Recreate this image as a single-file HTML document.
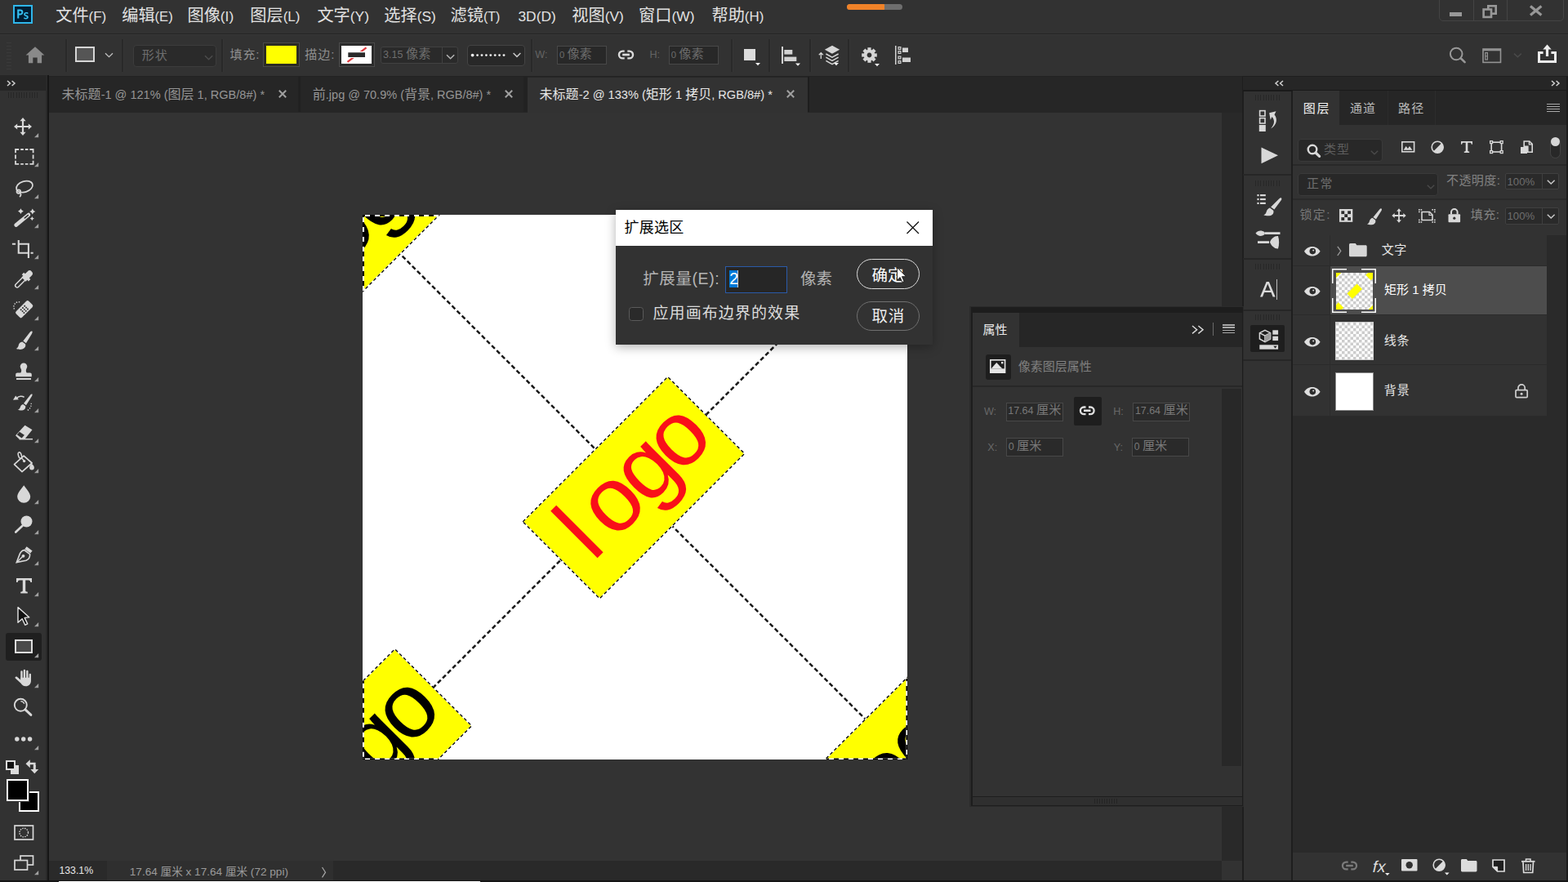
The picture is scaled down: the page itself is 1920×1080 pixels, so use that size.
<!DOCTYPE html><html lang="zh-CN"><head><meta charset="utf-8"><title>Photoshop</title><style>
html,body{margin:0;padding:0;background:#323232;}
body{width:1920px;height:1080px;position:relative;overflow:hidden;font-family:"Liberation Sans",sans-serif;}
div{position:absolute;box-sizing:border-box;}
.t{position:absolute;white-space:nowrap;line-height:1.5;overflow:visible;display:block;width:0;height:0;font-family:"Liberation Sans","Noto Sans CJK SC",sans-serif;}
.i{position:absolute;overflow:visible;}
</style></head><body><div style="left:0px;top:0px;width:1920px;height:41px;background:#323232;"></div>
<div style="left:0px;top:40.5px;width:1920px;height:1.5px;background:#242424;"></div>
<div style="left:0px;top:42px;width:1920px;height:51px;background:#323232;"></div>
<div style="left:0px;top:42px;width:1920px;height:1px;background:#383838;"></div>
<div style="left:0px;top:93px;width:1920px;height:1.5px;background:#222222;"></div>
<div style="left:60px;top:94px;width:1461px;height:44px;background:#262626;"></div>
<div style="left:60px;top:137.5px;width:1436px;height:916.5px;background:#333333;"></div>
<div style="left:1495.5px;top:137.5px;width:25px;height:916.5px;background:#292929;"></div>
<div style="left:60px;top:1053.7px;width:1436px;height:25px;background:#292929;"></div>
<div style="left:60px;top:1053.7px;width:347.5px;height:25px;background:#2f2f2f;"></div>
<div style="left:60px;top:1053.7px;width:70.5px;height:25px;background:#2a2a2a;"></div>
<div style="left:1495.5px;top:1053.7px;width:25px;height:25px;background:#323232;"></div>
<div style="left:0px;top:92px;width:57px;height:19px;background:#262626;"></div>
<div style="left:0px;top:111px;width:57px;height:969px;background:#323232;"></div>
<div style="left:55.5px;top:92px;width:2.5px;height:988px;background:#2a2a2a;"></div>
<div style="left:58px;top:92px;width:2px;height:988px;background:#161616;"></div>
<div style="left:1520.5px;top:93px;width:399.5px;height:987px;background:#1e1e1e;"></div>
<div style="left:1522px;top:93.5px;width:398px;height:16.5px;background:#262626;"></div>
<div style="left:1522.5px;top:111.8px;width:58.8px;height:968px;background:#323232;"></div>
<div style="left:1583.3px;top:111px;width:334.7px;height:969px;background:#323232;"></div>
<div style="left:1918px;top:93px;width:2px;height:987px;background:#1c1c1c;"></div>
<div style="left:1522px;top:110px;width:396px;height:1.8px;background:#1a1a1a;"></div>
<div style="left:0px;top:1078px;width:1920px;height:2px;background:#151515;"></div>
<div style="left:72px;top:1078.7px;width:516px;height:1.3px;background:#ffffff;"></div>
<div style="left:16px;top:6px;width:24px;height:23px;background:#001d33;border:2px solid #2fb6ea;"></div>
<svg class="i" style="left:16px;top:6px;" width="24" height="23" viewBox="0 0 24 23"><g fill="#35bff0"><path d="M5.2 5.6h3.5c2.3 0 3.7 1.2 3.7 3.3 0 2.3-1.6 3.5-3.8 3.5H7.3v4.2H5.2zM7.3 7.4v3.2h1.1c1.2 0 1.9-.6 1.9-1.7 0-1-.7-1.5-1.8-1.5zM16.3 10.6c-.9 0-1.3.3-1.3.8 0 .5.4.8 1.5 1.2 1.6.6 2.3 1.3 2.3 2.5 0 1.6-1.2 2.5-3.1 2.5-.9 0-1.8-.2-2.4-.5v-1.8c.7.4 1.6.7 2.4.7.8 0 1.2-.3 1.2-.8s-.4-.8-1.4-1.2c-1.600-.6-2.300-1.400-2.300-2.500 0-1.400 1.100-2.400 3-2.400.8 0 1.600.1 2.200.4v1.700c-.6-.3-1.400-.6-2.100-.6z"/></g></svg>
<span class="t" style="left:68.23px;top:3.55px;font-size:20.2px;color:#e2e2e2">文件<span style="font-size:16.92px">(F)</span></span>
<span class="t" style="left:149.19px;top:3.55px;font-size:20.2px;color:#e2e2e2">编辑<span style="font-size:16.57px">(E)</span></span>
<span class="t" style="left:229.46px;top:3.55px;font-size:20.2px;color:#e2e2e2">图像<span style="font-size:17.37px">(I)</span></span>
<span class="t" style="left:306.26px;top:3.55px;font-size:20.2px;color:#e2e2e2">图层<span style="font-size:17.03px">(L)</span></span>
<span class="t" style="left:388.43px;top:3.55px;font-size:20.2px;color:#e2e2e2">文字<span style="font-size:17.37px">(Y)</span></span>
<span class="t" style="left:470.25px;top:3.55px;font-size:20.2px;color:#e2e2e2">选择<span style="font-size:17.37px">(S)</span></span>
<span class="t" style="left:551.59px;top:3.55px;font-size:20.2px;color:#e2e2e2">滤镜<span style="font-size:15.91px">(T)</span></span>
<span class="t" style="left:634.48px;top:3.55px;font-size:20.2px;color:#e2e2e2"><span style="font-size:17.37px">3D(D)</span></span>
<span class="t" style="left:700.37px;top:3.55px;font-size:20.2px;color:#e2e2e2">视图<span style="font-size:17.37px">(V)</span></span>
<span class="t" style="left:782.10px;top:3.55px;font-size:20.2px;color:#e2e2e2">窗口<span style="font-size:17.37px">(W)</span></span>
<span class="t" style="left:871.47px;top:3.55px;font-size:20.2px;color:#e2e2e2">帮助<span style="font-size:16.91px">(H)</span></span>
<div style="left:1037px;top:5px;width:68px;height:7px;background:#6e6e6e;border-radius:4px;"></div>
<div style="left:1037px;top:5px;width:46px;height:7px;background:#f08228;border-radius:4px 1px 1px 4px;"></div>
<div style="left:1762px;top:-4px;width:153px;height:30px;border:1px solid #444;border-radius:0 0 5px 5px;"></div>
<div style="left:1803.5px;top:0px;width:1px;height:26px;background:#444;"></div>
<div style="left:1844.5px;top:0px;width:1px;height:26px;background:#444;"></div>
<div style="left:1775px;top:15px;width:15px;height:5px;background:#989898;"></div>
<svg class="i" style="left:1812px;top:4px;" width="24" height="20" viewBox="0 0 24 20"><g fill="none" stroke="#989898" stroke-width="2.6"><rect x="10.3" y="3.3" width="9.4" height="9.4"/><rect x="4.6" y="7.5" width="9.4" height="9.4" fill="#323232"/></g></svg>
<svg class="i" style="left:1870px;top:4px;" width="22" height="18" viewBox="0 0 22 18"><path d="M4 3.6L17.4 14.4M17.4 3.6L4 14.4" stroke="#989898" stroke-width="3.2" fill="none"/></svg>
<div style="left:80px;top:48px;width:2px;height:40px;background:#292929;"></div>
<div style="left:82px;top:48px;width:1px;height:40px;background:#363636;"></div>
<div style="left:149px;top:48px;width:2px;height:40px;background:#292929;"></div>
<div style="left:151px;top:48px;width:1px;height:40px;background:#363636;"></div>
<div style="left:271px;top:48px;width:2px;height:40px;background:#292929;"></div>
<div style="left:273px;top:48px;width:1px;height:40px;background:#363636;"></div>
<div style="left:650px;top:48px;width:2px;height:40px;background:#292929;"></div>
<div style="left:652px;top:48px;width:1px;height:40px;background:#363636;"></div>
<div style="left:895px;top:48px;width:2px;height:40px;background:#292929;"></div>
<div style="left:897px;top:48px;width:1px;height:40px;background:#363636;"></div>
<div style="left:941px;top:48px;width:2px;height:40px;background:#292929;"></div>
<div style="left:943px;top:48px;width:1px;height:40px;background:#363636;"></div>
<div style="left:990.5px;top:48px;width:2px;height:40px;background:#292929;"></div>
<div style="left:992.5px;top:48px;width:1px;height:40px;background:#363636;"></div>
<div style="left:1038px;top:48px;width:2px;height:40px;background:#292929;"></div>
<div style="left:1040px;top:48px;width:1px;height:40px;background:#363636;"></div>
<div style="left:8px;top:52px;width:6px;height:1px;background:#3a3a3a;"></div>
<div style="left:8px;top:56px;width:6px;height:1px;background:#3a3a3a;"></div>
<div style="left:8px;top:60px;width:6px;height:1px;background:#3a3a3a;"></div>
<div style="left:8px;top:64px;width:6px;height:1px;background:#3a3a3a;"></div>
<div style="left:8px;top:68px;width:6px;height:1px;background:#3a3a3a;"></div>
<div style="left:8px;top:72px;width:6px;height:1px;background:#3a3a3a;"></div>
<div style="left:8px;top:76px;width:6px;height:1px;background:#3a3a3a;"></div>
<div style="left:8px;top:80px;width:6px;height:1px;background:#3a3a3a;"></div>
<div style="left:8px;top:84px;width:6px;height:1px;background:#3a3a3a;"></div>
<svg class="i" style="left:30px;top:55px;" width="26" height="24" viewBox="0 0 26 24"><path d="M13 2.2L1.6 12.6h3.3v9.6h5.400v-6.600h5.400v6.600h5.400v-9.600h3.300z" fill="#8a8a8a"/></svg>
<div style="left:92px;top:57px;width:24px;height:19px;background:#555;border:2px solid #d6d6d6;"></div>
<svg class="i" style="left:127.5px;top:63.5px;" width="11" height="8" viewBox="0 0 11 8"><path d="M1 1.200l4.500 4.400 4.500-4.400" fill="none" stroke="#c0c0c0" stroke-width="1.300"/></svg>
<div style="left:162.5px;top:55px;width:102px;height:27px;background:#2a2a2a;border:1px solid #3c3c3c;border-radius:4px;"></div>
<span class="t" style="left:173.80px;top:56.92px;font-size:15px;color:#6e6e6e;letter-spacing:1.04px">形状</span>
<svg class="i" style="left:250px;top:67px;" width="12" height="8" viewBox="0 0 12 8"><path d="M1 1.2l4.6 4.600 4.600-4.600" fill="none" stroke="#4c4c4c" stroke-width="1.5"/></svg>
<span class="t" style="left:281.46px;top:56.33px;font-size:15px;color:#8e8e8e;letter-spacing:0.95px">填充:</span>
<div style="left:322px;top:52px;width:45px;height:30px;background:#2b2b22;border:1px solid #4b4b4b;"></div>
<div style="left:326px;top:56px;width:37px;height:22px;background:#ffff00;"></div>
<span class="t" style="left:373.17px;top:56.33px;font-size:15px;color:#8e8e8e;letter-spacing:1.1px">描边:</span>
<div style="left:414.5px;top:52px;width:44px;height:30px;background:#2b2b2b;border:1px solid #4b4b4b;"></div>
<div style="left:418px;top:56px;width:37px;height:22px;background:#ffffff;"></div>
<svg class="i" style="left:418px;top:56px;" width="37" height="22" viewBox="0 0 37 22"><path d="M7.5 19.800L30.500 2.300" stroke="#e03a3e" stroke-width="2.200"/><rect x="6.500" y="7" width="24" height="8" fill="#fff"/><rect x="8.300" y="8.300" width="20.700" height="5.700" fill="#2a2a2a"/></svg>
<div style="left:465.5px;top:56.5px;width:95.5px;height:21.5px;background:#2a2a2a;border:1px solid #414141;border-radius:3px;"></div>
<div style="left:540.5px;top:57px;width:1px;height:21px;background:#414141;"></div>
<span class="t" style="left:469.12px;top:55.38px;font-size:15.2px;color:#6e6e6e"><span style="font-size:12.52px">3.15 </span>像素</span>
<svg class="i" style="left:546px;top:66px;" width="12" height="8" viewBox="0 0 12 8"><path d="M1 1.2l4.6 4.600 4.600-4.600" fill="none" stroke="#b4b4b4" stroke-width="1.5"/></svg>
<div style="left:572px;top:55px;width:70.5px;height:25.5px;background:#282828;border:1px solid #444;border-radius:4px;"></div>
<svg class="i" style="left:572px;top:55px;" width="70" height="25" viewBox="0 0 70 25"><g fill="#f0f0f0"><circle cx="6.6" cy="12.600" r="1.9"/><circle cx="12.6" cy="12.600" r="1.4"/><circle cx="18.0" cy="12.600" r="1.4"/><circle cx="23.4" cy="12.600" r="1.4"/><circle cx="28.8" cy="12.600" r="1.4"/><circle cx="34.2" cy="12.600" r="1.4"/><circle cx="39.6" cy="12.600" r="1.4"/><circle cx="45.0" cy="12.600" r="1.4"/></g><path d="M56.600 10l4.400 4.400 4.400-4.400" fill="none" stroke="#c6c6c6" stroke-width="1.5"/></svg>
<span class="t" style="left:655.31px;top:58.27px;font-size:12.6px;color:#646464">W:</span>
<div style="left:682px;top:55.5px;width:60.5px;height:23px;background:#282828;border:1px solid #484848;"></div>
<span class="t" style="left:685.02px;top:55.38px;font-size:15.2px;color:#6c6c6c"><span style="font-size:11.28px">0 </span>像素</span>
<svg class="i" style="left:756.3px;top:61px;" width="21" height="12" viewBox="0 0 20.500 11.600"><g fill="none" stroke="#dcdcdc" stroke-width="2.300"><path d="M8.500 1.500H6.200a4.300 4.300 0 0 0 0 8.600h2.300M12 1.500h2.300a4.300 4.300 0 0 1 0 8.600H12"/><path d="M6 5.800h8.500" stroke-width="2.600"/></g></svg>
<span class="t" style="left:795.48px;top:58.27px;font-size:12.6px;color:#646464">H:</span>
<div style="left:819px;top:55.5px;width:60.5px;height:23px;background:#282828;border:1px solid #484848;"></div>
<span class="t" style="left:821.82px;top:55.38px;font-size:15.2px;color:#6c6c6c"><span style="font-size:11.28px">0 </span>像素</span>
<div style="left:911px;top:60px;width:14px;height:14px;background:#dcdcdc;"></div>
<svg class="i" style="left:925px;top:77px;" width="6" height="4" viewBox="0 0 6 4"><path d="M0 0h6l-3 3.200z" fill="#f2f2f2"/></svg>
<svg class="i" style="left:956px;top:56px;" width="26" height="26" viewBox="0 0 26 26"><g fill="#d2d2d2"><rect x="1" y="1" width="2" height="21"/><rect x="4.300" y="5" width="10" height="5.600"/><rect x="4.300" y="13.600" width="15" height="5.400"/></g><g transform="translate(18 21.500)"><path d="M0 0h6l-3 3.200z" fill="#f2f2f2"/></g></svg>
<svg class="i" style="left:1001px;top:55px;" width="28" height="26" viewBox="0 0 28 26"><g fill="none" stroke="#d6d6d6" stroke-width="1.500"><path d="M18 1.600l7.600 4.200-7.600 4.200-7.600-4.200z" fill="#d6d6d6"/><path d="M10.400 11l7.600 4.200 7.600-4.200M10.400 15.200l7.600 4.200 7.600-4.200M10.400 19.400l7.600 4.200 7.600-4.200" /><path d="M4.300 17v-7M1.800 12.300l2.500-2.600 2.500 2.600" stroke-width="1.300"/></g><g transform="translate(20 22)"><path d="M0 0h6l-3 3.200z" fill="#f2f2f2"/></g></svg>
<svg class="i" style="left:1054.5px;top:57.5px;" width="19" height="19" viewBox="0 0 19 19"><g transform="translate(9.500 9.500)" fill="#d6d6d6"><rect x="-2.100" y="-9.300" width="4.200" height="5" transform="rotate(0)"/><rect x="-2.100" y="-9.300" width="4.200" height="5" transform="rotate(45)"/><rect x="-2.100" y="-9.300" width="4.200" height="5" transform="rotate(90)"/><rect x="-2.100" y="-9.300" width="4.200" height="5" transform="rotate(135)"/><rect x="-2.100" y="-9.300" width="4.200" height="5" transform="rotate(180)"/><rect x="-2.100" y="-9.300" width="4.200" height="5" transform="rotate(225)"/><rect x="-2.100" y="-9.300" width="4.200" height="5" transform="rotate(270)"/><rect x="-2.100" y="-9.300" width="4.200" height="5" transform="rotate(315)"/><path fill-rule="evenodd" d="M0-6.800a6.800 6.800 0 1 0 .01 0zM0-2.900a2.900 2.900 0 1 1-.01 0z"/></g></svg>
<svg class="i" style="left:1071px;top:78px;" width="6" height="4" viewBox="0 0 6 4"><path d="M0 0h6l-3 3.200z" fill="#f2f2f2"/></svg>
<svg class="i" style="left:1095px;top:56px;" width="22" height="24" viewBox="0 0 22 24"><g fill="#d2d2d2"><rect x="1" y="0" width="1.500" height="23"/><rect x="10" y="2.500" width="7" height="5.500"/><rect x="10" y="14.500" width="10" height="5.500"/></g><g fill="none" stroke="#d2d2d2" stroke-width="1.200"><rect x="5.100" y="1.600" width="2.800" height="2.800"/><rect x="5.100" y="6.600" width="2.800" height="2.800"/><rect x="5.100" y="13.100" width="2.800" height="2.800"/><rect x="5.100" y="18.600" width="2.800" height="2.800"/></g></svg>
<svg class="i" style="left:1773px;top:56px;" width="24" height="24" viewBox="0 0 24 24"><circle cx="10.200" cy="10" r="7.300" fill="none" stroke="#989898" stroke-width="2"/><path d="M15.600 15.300l5 4.800" stroke="#989898" stroke-width="2.600" stroke-linecap="round"/></svg>
<svg class="i" style="left:1815px;top:58px;" width="24" height="20" viewBox="0 0 24 20"><g fill="none" stroke="#949494"><rect x="1" y="2" width="21.500" height="16.400" stroke-width="1.600"/><path d="M1 3.200h21.500" stroke-width="2.200"/><rect x="3.800" y="6.600" width="2.600" height="8.400" stroke-width="1.200"/><path d="M3.800 10.800h2.600" stroke-width="1"/></g></svg>
<svg class="i" style="left:1853px;top:64px;" width="11" height="8" viewBox="0 0 11 8"><path d="M1 1.600l4.400 4.200 4.400-4.200" fill="none" stroke="#4a4a4a" stroke-width="1.500"/></svg>
<svg class="i" style="left:1882px;top:54px;" width="25" height="24" viewBox="0 0 25 24"><g fill="none" stroke="#ececec" stroke-width="3"><path d="M7.600 10.500H2.500v11h20v-11h-5.100"/><path d="M12.500 15V3.500" stroke-width="3.200"/></g><path d="M12.500 0.500l5.200 6h-10.400z" fill="#ececec"/></svg>
<div style="left:60px;top:94.3px;width:1461px;height:42.5px;background:#262626;"></div>
<div style="left:364.5px;top:94.3px;width:3px;height:42.5px;background:#212121;"></div>
<div style="left:640.5px;top:94.3px;width:5px;height:42.5px;background:#222222;"></div>
<div style="left:645.5px;top:94.8px;width:343.5px;height:43px;background:#323232;"></div>
<div style="left:989px;top:94.3px;width:2px;height:42.5px;background:#1e1e1e;"></div>
<span class="t" style="left:75.62px;top:103.60px;font-size:16px;color:#959595">未标题<span style="font-size:14.56px">-1 @ 121% (</span>图层<span style="font-size:14.56px"> 1, RGB/8#) *</span></span>
<svg class="i" style="left:340.6px;top:109.7px;" width="10" height="10" viewBox="0 0 10 10"><path d="M.8.800l8.400 8.400M9.200.800l-8.400 8.400" fill="none" stroke="#a0a0a0" stroke-width="2"/></svg>
<span class="t" style="left:382.82px;top:103.60px;font-size:16px;color:#959595">前<span style="font-size:14.5px">.jpg @ 70.9% (</span>背景<span style="font-size:14.5px">, RGB/8#) *</span></span>
<svg class="i" style="left:617.6px;top:109.7px;" width="10" height="10" viewBox="0 0 10 10"><path d="M.8.800l8.400 8.400M9.200.800l-8.400 8.400" fill="none" stroke="#a0a0a0" stroke-width="2"/></svg>
<span class="t" style="left:660.62px;top:103.60px;font-size:16px;color:#e6e6e6">未标题<span style="font-size:14.61px">-2 @ 133% (</span>矩形<span style="font-size:14.61px"> 1 </span>拷贝<span style="font-size:14.61px">, RGB/8#) *</span></span>
<svg class="i" style="left:962.5px;top:109.7px;" width="10" height="10" viewBox="0 0 10 10"><path d="M.8.800l8.400 8.400M9.200.800l-8.400 8.400" fill="none" stroke="#a0a0a0" stroke-width="2"/></svg>
<svg class="i" style="left:8px;top:98px;" width="12" height="8" viewBox="0 0 12 8"><path d="M1 1l3.400 3-3.400 3M6.600 1l3.400 3-3.400 3" fill="none" stroke="#d0d0d0" stroke-width="1.500"/></svg>
<div style="left:10px;top:113px;width:1px;height:7px;background:#262626;"></div>
<div style="left:13.2px;top:113px;width:1px;height:7px;background:#262626;"></div>
<div style="left:16.4px;top:113px;width:1px;height:7px;background:#262626;"></div>
<div style="left:19.6px;top:113px;width:1px;height:7px;background:#262626;"></div>
<div style="left:22.8px;top:113px;width:1px;height:7px;background:#262626;"></div>
<div style="left:26px;top:113px;width:1px;height:7px;background:#262626;"></div>
<div style="left:29.2px;top:113px;width:1px;height:7px;background:#262626;"></div>
<div style="left:32.4px;top:113px;width:1px;height:7px;background:#262626;"></div>
<div style="left:35.6px;top:113px;width:1px;height:7px;background:#262626;"></div>
<div style="left:38.8px;top:113px;width:1px;height:7px;background:#262626;"></div>
<div style="left:42px;top:113px;width:1px;height:7px;background:#262626;"></div>
<div style="left:45.2px;top:113px;width:1px;height:7px;background:#262626;"></div>
<div style="left:7px;top:775px;width:44px;height:34px;background:#1f1f1f;border-radius:3px;"></div>
<svg class="i" style="left:16px;top:143.3px;" width="28" height="28" viewBox="0 0 28 28"><g fill="#d8d8d8"><path d="M12 1l3.600 4.200h-2.500v5.700h5.700v-2.500l4.200 3.600-4.200 3.600v-2.500h-5.700v5.700h2.500l-3.600 4.200-3.600-4.200h2.500v-5.700h-5.700v2.500l-4.200-3.600 4.200-3.600v2.500h5.700v-5.700h-2.500z"/></g></svg>
<svg class="i" style="left:41.6px;top:162.8px;" width="6" height="6" viewBox="0 0 6 6"><path d="M5.200 0v5.200h-5.200z" fill="#a0a0a0"/></svg>
<svg class="i" style="left:16.9px;top:180.3px;" width="28" height="28" viewBox="0 0 28 28"><path d="M1.1 3L6.2 3M8.2 3L11.8 3M13.8 3L17.4 3M19.4 3L24.5 3M1.1 20.9L6.2 20.9M8.2 20.9L11.8 20.9M13.8 20.9L17.4 20.9M19.4 20.9L24.5 20.9M2 3L2 7.2M2 9.4L2 14.5M2 16.7L2 20.9M23.6 3L23.6 7.2M23.6 9.4L23.6 14.5M23.6 16.7L23.6 20.9" fill="none" stroke="#d8d8d8" stroke-width="1.800" stroke-linecap="butt"/></svg>
<svg class="i" style="left:41.6px;top:198.8px;" width="6" height="6" viewBox="0 0 6 6"><path d="M5.200 0v5.200h-5.200z" fill="#a0a0a0"/></svg>
<svg class="i" style="left:17px;top:219px;" width="28" height="28" viewBox="0 0 28 28"><g fill="none" stroke="#d8d8d8" stroke-width="1.700"><ellipse cx="13" cy="9.600" rx="10.300" ry="6.600" transform="rotate(-18 13 9.600)"/><circle cx="5.800" cy="15.600" r="2.300"/><path d="M7.600 17.200c1.400 1.600 1.300 3.400-.6 4.800"/></g></svg>
<svg class="i" style="left:41.6px;top:238.2px;" width="6" height="6" viewBox="0 0 6 6"><path d="M5.200 0v5.200h-5.200z" fill="#a0a0a0"/></svg>
<svg class="i" style="left:17px;top:254px;" width="28" height="28" viewBox="0 0 28 28"><path d="M2.600 21.600L18 9" fill="none" stroke="#d8d8d8" stroke-width="4.600" stroke-linecap="round"/><path d="M13.300 12.900L17.300 9.600" stroke="#323232" stroke-width="1.500" stroke-linecap="round"/><path d="M8.4 1.3Q9.148 3.952 11.8 4.7Q9.148 5.448 8.4 8.1Q7.652 5.448 5 4.7Q7.652 3.952 8.4 1.3zM22.8 1.4Q23.592 4.208 26.4 5Q23.592 5.792 22.8 8.6Q22.008 5.792 19.2 5Q22.008 4.208 22.8 1.4zM22.3 11Q22.872 13.028 24.9 13.6Q22.872 14.172 22.3 16.2Q21.728 14.172 19.7 13.6Q21.728 13.028 22.3 11z" fill="#d8d8d8"/></svg>
<svg class="i" style="left:41.6px;top:274px;" width="6" height="6" viewBox="0 0 6 6"><path d="M5.200 0v5.200h-5.200z" fill="#a0a0a0"/></svg>
<svg class="i" style="left:15px;top:292.5px;" width="28" height="28" viewBox="0 0 28 28"><g fill="none" stroke="#d8d8d8" stroke-width="2.100"><path d="M7.750 1v15.750H21"/><path d="M7.750 5.750H19.900V23.100"/><path d="M-0.100 5.750H4.100M22.500 16.750H25.700"/></g></svg>
<svg class="i" style="left:41.6px;top:312px;" width="6" height="6" viewBox="0 0 6 6"><path d="M5.200 0v5.200h-5.200z" fill="#a0a0a0"/></svg>
<svg class="i" style="left:17px;top:329.5px;" width="28" height="28" viewBox="0 0 28 28"><g transform="translate(2.400 21.200) rotate(-45)"><path d="M2.300 -2.300H15V2.300H2.300A2.300 2.300 0 0 1 2.300 -2.300z" fill="none" stroke="#d8d8d8" stroke-width="1.500"/><path d="M13.200 -3.200h2.600v-2.200h3.400v2.200h4.200a3.600 3.600 0 0 1 0 7.200h-4.200v2.200h-3.400v-2.200h-2.600z" fill="#d8d8d8"/></g></svg>
<svg class="i" style="left:41.6px;top:349px;" width="6" height="6" viewBox="0 0 6 6"><path d="M5.200 0v5.200h-5.200z" fill="#a0a0a0"/></svg>
<svg class="i" style="left:15px;top:367px;" width="28" height="28" viewBox="0 0 28 28"><g transform="rotate(-45 14.500 11.500)"><rect x="3.500" y="6.500" width="22" height="10.500" rx="2.200" fill="#d8d8d8"/><g fill="#323232"><circle cx="11.300" cy="9.300" r="1"/><circle cx="14.500" cy="9.300" r="1"/><circle cx="17.700" cy="9.300" r="1"/><circle cx="11.300" cy="12" r="1"/><circle cx="14.500" cy="12" r="1"/><circle cx="17.700" cy="12" r="1"/><circle cx="11.300" cy="14.600" r="1"/><circle cx="14.500" cy="14.600" r="1"/><circle cx="17.700" cy="14.600" r="1"/></g></g><path d="M2.500 11.500a6 6 0 0 1 7-8.500" fill="none" stroke="#d8d8d8" stroke-width="1.400" stroke-dasharray="1.400 1.600"/></svg>
<svg class="i" style="left:41.6px;top:386.5px;" width="6" height="6" viewBox="0 0 6 6"><path d="M5.200 0v5.200h-5.200z" fill="#a0a0a0"/></svg>
<svg class="i" style="left:18px;top:404.5px;" width="28" height="28" viewBox="0 0 28 28"><g fill="#d8d8d8"><path d="M21.300 0.600c.6.300.5 1.500-.2 2.800L13.900 15.200l-3.600-2.600L18.900 1.600c.9-1 1.800-1.400 2.400-1z"/><path d="M9.300 13.600l3.700 2.700c1 2.800-.6 5.300-3.600 6.300-2.600.8-5.800.1-7.800-.6 2.300-.9 2.700-2.600 3.200-4.500.5-2 2.100-3.500 4.500-3.900z"/></g></svg>
<svg class="i" style="left:41.6px;top:424px;" width="6" height="6" viewBox="0 0 6 6"><path d="M5.200 0v5.200h-5.200z" fill="#a0a0a0"/></svg>
<svg class="i" style="left:19px;top:443.5px;" width="28" height="28" viewBox="0 0 28 28"><g fill="#d8d8d8"><path d="M10 0.500a4.300 4.300 0 0 1 4.300 4.300c0 1.600-1 2.600-1.300 3.700-.4 1.300-.2 2.800.7 4h4.100c1.200 0 2 .8 2 2v2.800H.2v-2.800c0-1.200.800-2 2-2h4.100c.9-1.200 1.100-2.700.7-4-.3-1.100-1.300-2.100-1.300-3.700A4.300 4.300 0 0 1 10 .5z"/><rect x="1" y="19" width="18" height="2"/></g></svg>
<svg class="i" style="left:41.6px;top:462px;" width="6" height="6" viewBox="0 0 6 6"><path d="M5.200 0v5.200h-5.200z" fill="#a0a0a0"/></svg>
<svg class="i" style="left:15.5px;top:481.5px;" width="28" height="28" viewBox="0 0 28 28"><g fill="#d8d8d8"><path d="M23.300 0.600c.5.300.4 1.300-.2 2.400L16 14.200l-3-2.300L21.200 1.400c.8-.9 1.600-1.200 2.100-.8z"/><path d="M12.200 13l3 2.300c.5 2.200-.6 4.200-3 5-2.200.7-4.900.1-6.500-.5 2.200-.7 2.700-2.100 3.300-3.600.4-1.600 1.500-2.800 3.200-3.200z"/><path d="M0 7.800l6.800-.6-3.600-4.800z"/></g><path d="M4.600 5.400c2.600-2.600 6.500-2.800 9-1" fill="none" stroke="#d8d8d8" stroke-width="1.500"/><path d="M17.800 20.300c3-1.500 4.800-4.700 4.400-8.600" fill="none" stroke="#d8d8d8" stroke-width="1.300" stroke-dasharray="1.300 1.700"/></svg>
<svg class="i" style="left:41.6px;top:499.8px;" width="6" height="6" viewBox="0 0 6 6"><path d="M5.200 0v5.200h-5.200z" fill="#a0a0a0"/></svg>
<svg class="i" style="left:17.5px;top:520px;" width="28" height="28" viewBox="0 0 28 28"><path d="M12.500 0.800l9 5.400-9 11.300H5.300L1 13.300z" fill="#d8d8d8"/><path d="M2.800 12.300l5.800 4.300 3.300-3.900-6-3.900z" fill="#323232"/><path d="M5.600 17.700H22" fill="none" stroke="#d8d8d8" stroke-width="1.500"/></svg>
<svg class="i" style="left:41.6px;top:537.2px;" width="6" height="6" viewBox="0 0 6 6"><path d="M5.200 0v5.200h-5.200z" fill="#a0a0a0"/></svg>
<svg class="i" style="left:16.5px;top:553px;" width="28" height="28" viewBox="0 0 28 28"><path d="M12.100 5.100l10 8.900-12.100 10.600L0.500 15.600z" fill="none" stroke="#d8d8d8" stroke-width="1.700" stroke-linejoin="round"/><ellipse cx="7.400" cy="4.600" rx="1.900" ry="3.900" transform="rotate(-18 7.400 4.600)" fill="none" stroke="#d8d8d8" stroke-width="1.500"/><path d="M8.800 7.600c1.600 1 3 2.300 3.800 3.800" fill="none" stroke="#d8d8d8" stroke-width="1.300"/><circle cx="12.600" cy="11.600" r="1.700" fill="#d8d8d8"/><path d="M21.200 14.300c2 1.800 3.700 3.300 3.700 5.200a2.900 2.900 0 0 1-5.800 0c0-1.900 1.600-3 2.100-5.200z" fill="#d8d8d8"/></svg>
<svg class="i" style="left:41.6px;top:574px;" width="6" height="6" viewBox="0 0 6 6"><path d="M5.200 0v5.200h-5.200z" fill="#a0a0a0"/></svg>
<svg class="i" style="left:21px;top:593.5px;" width="28" height="28" viewBox="0 0 28 28"><path d="M8.200 0.300c3.200 5 8 9 8 14a8 7.400 0 0 1-16 0c0-5 4.800-9 8-14z" fill="#d8d8d8"/></svg>
<svg class="i" style="left:41.6px;top:612px;" width="6" height="6" viewBox="0 0 6 6"><path d="M5.200 0v5.200h-5.200z" fill="#a0a0a0"/></svg>
<svg class="i" style="left:17.5px;top:631px;" width="28" height="28" viewBox="0 0 28 28"><circle cx="14.500" cy="7.500" r="7" fill="#d8d8d8"/><path d="M9.500 12.800L1.300 20.500" fill="none" stroke="#d8d8d8" stroke-width="2.700" stroke-linecap="round"/></svg>
<svg class="i" style="left:41.6px;top:649.2px;" width="6" height="6" viewBox="0 0 6 6"><path d="M5.200 0v5.200h-5.200z" fill="#a0a0a0"/></svg>
<svg class="i" style="left:18.5px;top:669.2px;" width="28" height="28" viewBox="0 0 28 28"><g fill="#d8d8d8"><path d="M13.600 0.300l7 5.200-2.400 3.100-7-5.200z"/></g><path d="M10.700 4.500l6.900 5.100c.2 3.400-1.700 6.400-4.600 7.700L1.300 19.600 5.500 8.700c1.200-2.300 3-3.700 5.200-4.200z" fill="none" stroke="#d8d8d8" stroke-width="1.600"/><path d="M1.800 19.200l6.800-6.600" fill="none" stroke="#d8d8d8" stroke-width="1.400"/><circle cx="9.500" cy="11.800" r="1.900" fill="#d8d8d8"/></svg>
<svg class="i" style="left:41.6px;top:687px;" width="6" height="6" viewBox="0 0 6 6"><path d="M5.200 0v5.200h-5.200z" fill="#a0a0a0"/></svg>
<svg class="i" style="left:19.5px;top:707.7px;" width="28" height="28" viewBox="0 0 28 28"><path d="M0 0h19v5h-1.600c-.2-1.800-.8-2.600-2.400-2.600h-3.800v12.700c0 1.200.5 1.600 2.600 1.700v1.700H5.200v-1.700c2.100-.1 2.600-.5 2.600-1.700V2.400H4C2.400 2.400 1.800 3.200 1.600 5H0z" fill="#d8d8d8"/></svg>
<svg class="i" style="left:41.6px;top:724.5px;" width="6" height="6" viewBox="0 0 6 6"><path d="M5.200 0v5.200h-5.200z" fill="#a0a0a0"/></svg>
<svg class="i" style="left:21.3px;top:743.3px;" width="28" height="28" viewBox="0 0 28 28"><path d="M1 0.600l13.800 12.300-5.700.5 3.600 7.500-3 1.400-3.500-7.600L1 19.200z" fill="#111" stroke="#e4e4e4" stroke-width="1.400" stroke-linejoin="round"/></svg>
<svg class="i" style="left:41.6px;top:762px;" width="6" height="6" viewBox="0 0 6 6"><path d="M5.200 0v5.200h-5.200z" fill="#a0a0a0"/></svg>
<svg class="i" style="left:19px;top:818.5px;" width="28" height="28" viewBox="0 0 28 28"><g fill="none" stroke="#d8d8d8" stroke-width="2.400" stroke-linecap="round"><path d="M7.450 3.500V12M10.900 1.900V12M14.350 2.900V12M17.800 7V13"/></g><path d="M6.200 10.800h12.800v3.400c0 4.800-2.900 7-6.400 7-3 0-4.700-1.500-6.200-3.700L-.2 11.600c-1-1.500.7-2.900 2.100-1.800l4.300 3.600z" fill="#d8d8d8"/></svg>
<svg class="i" style="left:41.6px;top:837px;" width="6" height="6" viewBox="0 0 6 6"><path d="M5.200 0v5.200h-5.200z" fill="#a0a0a0"/></svg>
<svg class="i" style="left:16.3px;top:854.2px;" width="28" height="28" viewBox="0 0 28 28"><circle cx="9.300" cy="9.300" r="7.500" fill="none" stroke="#d8d8d8" stroke-width="1.900"/><path d="M14.900 14.900l7 6.500" fill="none" stroke="#d8d8d8" stroke-width="2.900" stroke-linecap="round"/><path d="M9.300 4.600a4.700 4.700 0 0 1 4.400 3.200" fill="none" stroke="#d8d8d8" stroke-width="1.200"/></svg>
<div style="left:18px;top:782.5px;width:22px;height:17px;background:#4a4a4a;border:2px solid #dcdcdc;"></div>
<svg class="i" style="left:41.6px;top:799.5px;" width="6" height="6" viewBox="0 0 6 6"><path d="M5.200 0v5.200h-5.200z" fill="#a0a0a0"/></svg>
<svg class="i" style="left:17px;top:901px;" width="24" height="8" viewBox="0 0 24 8"><g fill="#d8d8d8"><circle cx="3.800" cy="4" r="2.700"/><circle cx="11.700" cy="4" r="2.700"/><circle cx="19.600" cy="4" r="2.700"/></g></svg>
<svg class="i" style="left:41.6px;top:912.5px;" width="6" height="6" viewBox="0 0 6 6"><path d="M5.200 0v5.200h-5.200z" fill="#a0a0a0"/></svg>
<div style="left:12.5px;top:937px;width:10.5px;height:10.5px;background:#dcdcdc;"></div>
<div style="left:7px;top:931px;width:11.5px;height:11.5px;background:#111;border:2px solid #dcdcdc;"></div>
<svg class="i" style="left:31px;top:929.5px;" width="18" height="18" viewBox="0 0 18 18"><g fill="#d8d8d8"><path d="M0.500 5.300L5.800 0.300v3.400h6.800v5h-2.600v-2.400H5.800v4z"/><path d="M11.300 17.300L6.400 12h3.400V7h3v5h3.400z"/></g></svg>
<div style="left:22.5px;top:968.5px;width:25.5px;height:25px;background:#000;border:2px solid #fff;"></div>
<div style="left:7.5px;top:954px;width:27px;height:26.5px;background:#000;border:2px solid #fff;outline:1px solid #323232;"></div>
<svg class="i" style="left:16.5px;top:1010px;" width="25" height="20" viewBox="0 0 25 20"><rect x="1" y="1" width="22.500" height="17" fill="none" stroke="#d8d8d8" stroke-width="1.700"/><circle cx="12.200" cy="9.500" r="5.300" fill="none" stroke="#d8d8d8" stroke-width="1.300" stroke-dasharray="1.500 1.300"/></svg>
<svg class="i" style="left:16.5px;top:1047px;" width="25" height="20" viewBox="0 0 25 20"><g fill="none" stroke="#d8d8d8" stroke-width="1.700"><rect x="8" y="1" width="15.500" height="11"/><rect x="1" y="6.500" width="15.500" height="11.500" fill="#323232"/></g></svg>
<svg class="i" style="left:41.6px;top:1065.5px;" width="6" height="6" viewBox="0 0 6 6"><path d="M5.200 0v5.200h-5.200z" fill="#a0a0a0"/></svg>
<span class="t" style="left:72.42px;top:1056.78px;font-size:12.3px;color:#e8e8e8">133.1%</span>
<span class="t" style="left:158.78px;top:1057.74px;font-size:13.6px;color:#9a9a9a">17.64 厘米 x 17.64 厘米 (72 ppi)</span>
<svg class="i" style="left:392.5px;top:1060.5px;" width="8" height="15" viewBox="0 0 8 15"><path d="M1.500 1l4 6.200-4 6.200" fill="none" stroke="#a8a8a8" stroke-width="1.200"/></svg>
<svg class="i" style="left:443.8px;top:262.8px;overflow:hidden;" width="667.4" height="667.4" viewBox="0 0 667.4 667.4"><defs><clipPath id="cv"><rect x="0" y="0" width="667.4" height="667.4"/></clipPath></defs><rect width="667.4" height="667.4" fill="#fff"/><g clip-path="url(#cv)"><g stroke="#1a1a1a" stroke-width="2.500" stroke-dasharray="5.400 3.200" fill="none"><path d="M0 2L665.4 667.4"/><path d="M667.4 -2L0 665.4"/></g><g transform="translate(331.95 334.15) rotate(-45)"><rect x="-125" y="-66" width="250" height="132" fill="#ffff00" transform="rotate(45) translate(0 0) rotate(-45)"/><g fill="#f90f19"><text x="-99.8 -62.6 -4.4 50.9" y="29.5" font-size="112" font-family="'Liberation Sans',sans-serif">logo</text></g></g><g transform="translate(0 0) rotate(-45)"><rect x="-125" y="-66" width="250" height="132" fill="#ffff00" transform="rotate(45) translate(0 0) rotate(-45)"/><g fill="#000"><text x="-99.8 -62.6 -4.4 50.9" y="29.5" font-size="112" font-family="'Liberation Sans',sans-serif">logo</text></g></g><g transform="translate(667.4 0) rotate(-45)"><rect x="-125" y="-66" width="250" height="132" fill="#ffff00" transform="rotate(45) translate(0 0) rotate(-45)"/><g fill="#000"><text x="-99.8 -62.6 -4.4 50.9" y="29.5" font-size="112" font-family="'Liberation Sans',sans-serif">logo</text></g></g><g transform="translate(0 667.4) rotate(-45)"><rect x="-125" y="-66" width="250" height="132" fill="#ffff00" transform="rotate(45) translate(-2.2 0.1) rotate(-45)"/><g fill="#000"><text x="-99.8 -62.6 -4.4 50.9" y="29.5" font-size="112" font-family="'Liberation Sans',sans-serif">logo</text></g></g><g transform="translate(667.4 667.4) rotate(-45)"><rect x="-125" y="-66" width="250" height="132" fill="#ffff00" transform="rotate(45) translate(-3.7 -3.7) rotate(-45)"/><g fill="#000"><text x="-99.8 -62.6 -4.4 50.9" y="29.5" font-size="112" font-family="'Liberation Sans',sans-serif">logo</text></g></g><rect x="-125.500" y="-66.500" width="251" height="133" fill="none" stroke="#fff" stroke-width="1.300"  transform="translate(331.95 334.15) rotate(-45)"/><rect x="-125.500" y="-66.500" width="251" height="133" fill="none" stroke="#000" stroke-width="1.300" stroke-dasharray="4 3" transform="translate(331.95 334.15) rotate(-45)"/><rect x="-125.500" y="-66.500" width="251" height="133" fill="none" stroke="#fff" stroke-width="1.300"  transform="translate(0 0) rotate(-45)"/><rect x="-125.500" y="-66.500" width="251" height="133" fill="none" stroke="#000" stroke-width="1.300" stroke-dasharray="4 3" transform="translate(0 0) rotate(-45)"/><rect x="-125.500" y="-66.500" width="251" height="133" fill="none" stroke="#fff" stroke-width="1.300"  transform="translate(667.4 0) rotate(-45)"/><rect x="-125.500" y="-66.500" width="251" height="133" fill="none" stroke="#000" stroke-width="1.300" stroke-dasharray="4 3" transform="translate(667.4 0) rotate(-45)"/><rect x="-125.500" y="-66.500" width="251" height="133" fill="none" stroke="#fff" stroke-width="1.300"  transform="translate(-2.2 667.5) rotate(-45)"/><rect x="-125.500" y="-66.500" width="251" height="133" fill="none" stroke="#000" stroke-width="1.300" stroke-dasharray="4 3" transform="translate(-2.2 667.5) rotate(-45)"/><rect x="-125.500" y="-66.500" width="251" height="133" fill="none" stroke="#fff" stroke-width="1.300"  transform="translate(663.7 663.7) rotate(-45)"/><rect x="-125.500" y="-66.500" width="251" height="133" fill="none" stroke="#000" stroke-width="1.300" stroke-dasharray="4 3" transform="translate(663.7 663.7) rotate(-45)"/><path d="M0 1L93.4 1" stroke="#fff" stroke-width="2" /><path d="M0 1L93.4 1" stroke="#000" stroke-width="2" stroke-dasharray="6 6" stroke-dashoffset="3"/><path d="M1 0L1 93.4" stroke="#fff" stroke-width="2" /><path d="M1 0L1 93.4" stroke="#000" stroke-width="2" stroke-dasharray="6 6" stroke-dashoffset="3"/><path d="M1 570.8L1 667.4" stroke="#fff" stroke-width="2" /><path d="M1 570.8L1 667.4" stroke="#000" stroke-width="2" stroke-dasharray="6 6" stroke-dashoffset="3"/><path d="M0 666.4L91.8 666.4" stroke="#fff" stroke-width="2" /><path d="M0 666.4L91.8 666.4" stroke="#000" stroke-width="2" stroke-dasharray="6 6" stroke-dashoffset="3"/><path d="M568 666.4L667.4 666.4" stroke="#fff" stroke-width="2" /><path d="M568 666.4L667.4 666.4" stroke="#000" stroke-width="2" stroke-dasharray="6 6" stroke-dashoffset="3"/><path d="M666.4 568L666.4 667.4" stroke="#fff" stroke-width="2" /><path d="M666.4 568L666.4 667.4" stroke="#000" stroke-width="2" stroke-dasharray="6 6" stroke-dashoffset="3"/></g></svg>
<div style="left:1187px;top:375px;width:336px;height:613px;background:#2b2b2b;"></div>
<div style="left:1189px;top:376px;width:333px;height:611px;background:#1d1d1d;"></div>
<div style="left:1190.5px;top:382.7px;width:330px;height:592px;background:#323232;"></div>
<div style="left:1190.5px;top:382.7px;width:330px;height:42px;background:#262626;"></div>
<div style="left:1190.5px;top:382.7px;width:57.5px;height:42px;background:#323232;"></div>
<div style="left:1190.5px;top:975.5px;width:330px;height:10.5px;background:#2f2f2f;"></div>
<div style="left:1340px;top:977.5px;width:1px;height:6px;background:#242424;"></div>
<div style="left:1343px;top:977.5px;width:1px;height:6px;background:#242424;"></div>
<div style="left:1346px;top:977.5px;width:1px;height:6px;background:#242424;"></div>
<div style="left:1349px;top:977.5px;width:1px;height:6px;background:#242424;"></div>
<div style="left:1352px;top:977.5px;width:1px;height:6px;background:#242424;"></div>
<div style="left:1355px;top:977.5px;width:1px;height:6px;background:#242424;"></div>
<div style="left:1358px;top:977.5px;width:1px;height:6px;background:#242424;"></div>
<div style="left:1361px;top:977.5px;width:1px;height:6px;background:#242424;"></div>
<div style="left:1364px;top:977.5px;width:1px;height:6px;background:#242424;"></div>
<div style="left:1367px;top:977.5px;width:1px;height:6px;background:#242424;"></div>
<span class="t" style="left:1203.39px;top:392.62px;font-size:15px;color:#ececec">属性</span>
<svg class="i" style="left:1459px;top:397.5px;" width="16" height="12" viewBox="0 0 16 12"><path d="M1 1l5.600 4.700-5.600 4.700M8.400 1l5.600 4.700-5.600 4.700" fill="none" stroke="#d8d8d8" stroke-width="1.500"/></svg>
<div style="left:1485px;top:395px;width:1.3px;height:15.5px;background:#6a6a6a;"></div>
<div style="left:1496.6px;top:397.3px;width:15.3px;height:1.3px;background:#a8a8a8;"></div>
<div style="left:1496.6px;top:400.4px;width:15.3px;height:1.3px;background:#a8a8a8;"></div>
<div style="left:1496.6px;top:403.5px;width:15.3px;height:1.3px;background:#a8a8a8;"></div>
<div style="left:1496.6px;top:406.6px;width:15.3px;height:1.3px;background:#a8a8a8;"></div>
<div style="left:1207.3px;top:434px;width:30.6px;height:30.5px;background:#1e1e1e;border-radius:3px;"></div>
<svg class="i" style="left:1211.8px;top:440px;" width="19.4" height="17" viewBox="0 0 19.4 17"><rect x="0" y="0" width="19.400" height="17" fill="#e4e4e4"/><rect x="1.600" y="1.600" width="16.200" height="9.800" fill="#1e1e1e"/><path d="M1.600 11.400l4-4.300 2.700-3.100 3.700 3.900 2.200 2.300 1.500 1.200z" fill="#e4e4e4"/><rect x="14" y="3" width="2.400" height="2.400" fill="#e4e4e4"/></svg>
<span class="t" style="left:1246.72px;top:437.93px;font-size:15px;color:#808080">像素图层属性</span>
<div style="left:1190.5px;top:472px;width:330px;height:2px;background:#272727;"></div>
<div style="left:1495.7px;top:476px;width:24.8px;height:462px;background:#282828;"></div>
<span class="t" style="left:1204.91px;top:494.77px;font-size:12.6px;color:#686868">W:</span>
<div style="left:1232px;top:492.5px;width:70px;height:23px;background:#2a2a2a;border:1px solid #484848;"></div>
<span class="t" style="left:1234.17px;top:491.08px;font-size:15.2px;color:#787878"><span style="font-size:12.55px">17.64 </span>厘米</span>
<div style="left:1314.5px;top:486px;width:34.5px;height:34.5px;background:#1e1e1e;border-radius:2px;"></div>
<svg class="i" style="left:1321px;top:496.8px;" width="20.5" height="11.6" viewBox="0 0 20.500 11.600"><g fill="none" stroke="#e0e0e0" stroke-width="2.300"><path d="M8.500 1.500H6.200a4.300 4.300 0 0 0 0 8.600h2.300M12 1.500h2.300a4.300 4.300 0 0 1 0 8.600H12"/><path d="M6 5.800h8.500" stroke-width="2.600"/></g></svg>
<span class="t" style="left:1363.18px;top:494.77px;font-size:12.6px;color:#686868">H:</span>
<div style="left:1387.2px;top:492.5px;width:69.5px;height:23px;background:#2a2a2a;border:1px solid #484848;"></div>
<span class="t" style="left:1389.98px;top:491.08px;font-size:15.2px;color:#787878"><span style="font-size:12.41px">17.64 </span>厘米</span>
<span class="t" style="left:1209.30px;top:538.96px;font-size:12.6px;color:#686868">X:</span>
<div style="left:1232px;top:536.3px;width:70px;height:23px;background:#2a2a2a;border:1px solid #484848;"></div>
<span class="t" style="left:1234.66px;top:535.08px;font-size:15.2px;color:#787878"><span style="font-size:12.51px">0 </span>厘米</span>
<span class="t" style="left:1363.84px;top:538.96px;font-size:12.6px;color:#686868">Y:</span>
<div style="left:1386.3px;top:536.3px;width:69.5px;height:23px;background:#2a2a2a;border:1px solid #484848;"></div>
<span class="t" style="left:1388.78px;top:535.08px;font-size:15.2px;color:#787878"><span style="font-size:12.15px">0 </span>厘米</span>
<svg class="i" style="left:1561px;top:98px;" width="12" height="8" viewBox="0 0 12 8"><path d="M4.400 1L1 4l3.400 3M10 1L6.600 4l3.400 3" fill="none" stroke="#d0d0d0" stroke-width="1.500"/></svg>
<svg class="i" style="left:1899px;top:98px;" width="12" height="8" viewBox="0 0 12 8"><path d="M1 1l3.400 3-3.400 3M6.600 1l3.400 3-3.400 3" fill="none" stroke="#d0d0d0" stroke-width="1.500"/></svg>
<div style="left:1537px;top:116px;width:1px;height:7px;background:#272727;"></div>
<div style="left:1540.2px;top:116px;width:1px;height:7px;background:#272727;"></div>
<div style="left:1543.4px;top:116px;width:1px;height:7px;background:#272727;"></div>
<div style="left:1546.6px;top:116px;width:1px;height:7px;background:#272727;"></div>
<div style="left:1549.8px;top:116px;width:1px;height:7px;background:#272727;"></div>
<div style="left:1553px;top:116px;width:1px;height:7px;background:#272727;"></div>
<div style="left:1556.2px;top:116px;width:1px;height:7px;background:#272727;"></div>
<div style="left:1559.4px;top:116px;width:1px;height:7px;background:#272727;"></div>
<div style="left:1562.6px;top:116px;width:1px;height:7px;background:#272727;"></div>
<div style="left:1565.8px;top:116px;width:1px;height:7px;background:#272727;"></div>
<svg class="i" style="left:1541px;top:134px;" width="26" height="28" viewBox="0 0 26 28"><g fill="none" stroke="#d8d8d8" stroke-width="1.600"><rect x="1.600" y="1.600" width="6.400" height="6.400"/><rect x="1.600" y="10.600" width="6.400" height="6.400"/></g><rect x="0.800" y="19" width="8" height="8" fill="#d8d8d8"/><path d="M13.200 4.200L21.500 2.200l-2 4.300c4 4.500 3.500 12.500-4.500 17 5-5.500 5.200-10.500 1.500-14.500l-1.800 3.800z" fill="#d8d8d8"/></svg>
<svg class="i" style="left:1544px;top:179.5px;" width="22" height="21" viewBox="0 0 22 21"><path d="M0.500 0.500L21 10.300 0.500 20.300z" fill="#d8d8d8"/></svg>
<div style="left:1522px;top:213px;width:59px;height:2px;background:#262626;"></div>
<div style="left:1537px;top:220.5px;width:1px;height:7px;background:#272727;"></div>
<div style="left:1540.2px;top:220.5px;width:1px;height:7px;background:#272727;"></div>
<div style="left:1543.4px;top:220.5px;width:1px;height:7px;background:#272727;"></div>
<div style="left:1546.6px;top:220.5px;width:1px;height:7px;background:#272727;"></div>
<div style="left:1549.8px;top:220.5px;width:1px;height:7px;background:#272727;"></div>
<div style="left:1553px;top:220.5px;width:1px;height:7px;background:#272727;"></div>
<div style="left:1556.2px;top:220.5px;width:1px;height:7px;background:#272727;"></div>
<div style="left:1559.4px;top:220.5px;width:1px;height:7px;background:#272727;"></div>
<div style="left:1562.6px;top:220.5px;width:1px;height:7px;background:#272727;"></div>
<div style="left:1565.8px;top:220.5px;width:1px;height:7px;background:#272727;"></div>
<svg class="i" style="left:1538px;top:237px;" width="33" height="27" viewBox="0 0 33 27"><g fill="#d8d8d8"><rect x="1.400" y="1" width="2.200" height="2.200"/><rect x="5" y="1" width="6.800" height="2.200"/><rect x="1.400" y="5.900" width="2.200" height="2.200"/><rect x="5" y="5.900" width="6.800" height="2.200"/><rect x="1.400" y="10.800" width="2.200" height="2.200"/><rect x="5" y="10.800" width="6.800" height="2.200"/><path d="M30.800 5.300c.8.500.7 1.700-.1 3L22.300 19.600l-4.200-3.200L28.400 6.200c.800-.900 1.700-1.300 2.400-.900z"/><path d="M17 17.500l4.200 3.200c1 3-.600 5.400-3.600 6.300-2.700.8-6.200.100-8.300-.700 2.400-.900 3-2.500 3.500-4.400.600-2.100 2-3.800 4.200-4.400z"/></g></svg>
<svg class="i" style="left:1537px;top:281px;" width="33" height="26" viewBox="0 0 33 26"><g fill="#d8d8d8"><path d="M0.500 4.500c2.500-3.500 7.500-3.800 10.500-1.500 1 1 1 2.500 0 3.500-3 2.300-8 2-10.500-2z"/><rect x="11.500" y="3.200" width="19" height="2.800"/><rect x="3" y="14.200" width="14" height="2.800"/><path d="M18 15.500c1.500-4.500 6-8 10-7.500 1.500 4.500 1.500 11 0 15.500-4 .5-8.500-3.500-10-8z"/></g></svg>
<div style="left:1522px;top:316px;width:59px;height:2px;background:#262626;"></div>
<div style="left:1537px;top:322.5px;width:1px;height:7px;background:#272727;"></div>
<div style="left:1540.2px;top:322.5px;width:1px;height:7px;background:#272727;"></div>
<div style="left:1543.4px;top:322.5px;width:1px;height:7px;background:#272727;"></div>
<div style="left:1546.6px;top:322.5px;width:1px;height:7px;background:#272727;"></div>
<div style="left:1549.8px;top:322.5px;width:1px;height:7px;background:#272727;"></div>
<div style="left:1553px;top:322.5px;width:1px;height:7px;background:#272727;"></div>
<div style="left:1556.2px;top:322.5px;width:1px;height:7px;background:#272727;"></div>
<div style="left:1559.4px;top:322.5px;width:1px;height:7px;background:#272727;"></div>
<div style="left:1562.6px;top:322.5px;width:1px;height:7px;background:#272727;"></div>
<div style="left:1565.8px;top:322.5px;width:1px;height:7px;background:#272727;"></div>
<svg class="i" style="left:1542.9px;top:344.7px;" width="19" height="19" viewBox="0 0 19 19"><path fill-rule="evenodd" d="M0 18.600L7.700 0h3.200L18.600 18.600h-3l-2.100-5.500H5.100L3 18.600zM6 10.700h6.600L9.300 2.500z" fill="#dadada"/></svg>
<div style="left:1563.2px;top:341.7px;width:1.3px;height:25.8px;background:#bdbdbd;"></div>
<div style="left:1522px;top:378.5px;width:59px;height:2px;background:#262626;"></div>
<div style="left:1537px;top:385px;width:1px;height:7px;background:#272727;"></div>
<div style="left:1540.2px;top:385px;width:1px;height:7px;background:#272727;"></div>
<div style="left:1543.4px;top:385px;width:1px;height:7px;background:#272727;"></div>
<div style="left:1546.6px;top:385px;width:1px;height:7px;background:#272727;"></div>
<div style="left:1549.8px;top:385px;width:1px;height:7px;background:#272727;"></div>
<div style="left:1553px;top:385px;width:1px;height:7px;background:#272727;"></div>
<div style="left:1556.2px;top:385px;width:1px;height:7px;background:#272727;"></div>
<div style="left:1559.4px;top:385px;width:1px;height:7px;background:#272727;"></div>
<div style="left:1562.6px;top:385px;width:1px;height:7px;background:#272727;"></div>
<div style="left:1565.8px;top:385px;width:1px;height:7px;background:#272727;"></div>
<div style="left:1531px;top:397.8px;width:41.5px;height:33.5px;background:#1e1e1e;border-radius:2px;"></div>
<svg class="i" style="left:1541px;top:403px;" width="26" height="26" viewBox="0 0 26 26"><g fill="none" stroke="#d8d8d8" stroke-width="1.500"><path d="M8 1.300l6.600 3.300v7.400L8 15.600 1.400 12V4.600z"/><path d="M1.400 4.600L8 8.200l6.600-3.600M8 8.200v7.400"/></g><path d="M8 8.200l6.600-3.600v7.400L8 15.600z" fill="#9a9a9a"/><g fill="#d8d8d8"><rect x="17.300" y="1.300" width="6.800" height="5.400"/><rect x="17.300" y="8.700" width="6.800" height="5.400"/><rect x="1.300" y="19.300" width="22.800" height="5.400"/></g><path d="M18.300 20.800h4.400l-2.200 2.800z" fill="#1e1e1e"/></svg>
<div style="left:1522px;top:439.5px;width:59px;height:2px;background:#262626;"></div>
<div style="left:1583.3px;top:111px;width:334.7px;height:41.5px;background:#262626;"></div>
<div style="left:1583.3px;top:111px;width:56.4px;height:41.5px;background:#323232;"></div>
<div style="left:1698.5px;top:111px;width:1px;height:41.5px;background:#2c2c2c;"></div>
<div style="left:1757px;top:111px;width:1px;height:41.5px;background:#2c2c2c;"></div>
<span class="t" style="left:1595.71px;top:122.23px;font-size:15px;color:#f2f2f2;letter-spacing:1.86px">图层</span>
<span class="t" style="left:1653.09px;top:122.23px;font-size:15px;color:#b8b8b8;letter-spacing:1.01px">通道</span>
<span class="t" style="left:1712.10px;top:122.23px;font-size:15px;color:#b8b8b8;letter-spacing:1.07px">路径</span>
<div style="left:1894.4px;top:126.6px;width:15.2px;height:1.3px;background:#a8a8a8;"></div>
<div style="left:1894.4px;top:129.7px;width:15.2px;height:1.3px;background:#a8a8a8;"></div>
<div style="left:1894.4px;top:132.8px;width:15.2px;height:1.3px;background:#a8a8a8;"></div>
<div style="left:1894.4px;top:135.9px;width:15.2px;height:1.3px;background:#a8a8a8;"></div>
<div style="left:1588.7px;top:170.2px;width:104.3px;height:28.1px;background:#282828;border:1px solid #3a3a3a;border-radius:4px;"></div>
<svg class="i" style="left:1600px;top:176px;" width="18" height="17" viewBox="0 0 18 17"><circle cx="7" cy="7" r="5.300" fill="none" stroke="#d8d8d8" stroke-width="2.400"/><path d="M11 11l4.600 4.300" stroke="#d8d8d8" stroke-width="3.200" stroke-linecap="round"/></svg>
<span class="t" style="left:1620.98px;top:172.23px;font-size:15px;color:#5e5e5e;letter-spacing:0.94px">类型</span>
<svg class="i" style="left:1678px;top:184px;" width="11" height="7" viewBox="0 0 11 7"><path d="M.8.800l4.200 4 4.200-4" fill="none" stroke="#4a4a4a" stroke-width="1.400"/></svg>
<svg class="i" style="left:1715.8px;top:173.3px;" width="18" height="14" viewBox="0 0 18 14"><rect x="0.800" y="0.800" width="14.800" height="12" fill="none" stroke="#d8d8d8" stroke-width="1.600"/><path d="M2.600 10.800l3-4.700 2.300 3 2.100-3 3.400 4.700z" fill="#d8d8d8"/></svg>
<svg class="i" style="left:1751.5px;top:172px;" width="17" height="17" viewBox="0 0 17 17"><circle cx="8.200" cy="8.200" r="7" fill="none" stroke="#d8d8d8" stroke-width="1.600"/><path d="M13.200 3.300A7 7 0 0 1 3.300 13.200z" fill="#d8d8d8"/></svg>
<svg class="i" style="left:1788.5px;top:172.8px;" width="14" height="14.2" viewBox="0 0 14 14.2"><path d="M0 0h14v3.800h-1.200c-.2-1.400-.6-2-1.800-2H8.300v9.500c0 .9.400 1.200 1.900 1.300v1.300H3.800v-1.300c1.500-.1 1.900-.4 1.900-1.300V1.800H3C1.800 1.800 1.400 2.400 1.200 3.800H0z" fill="#d8d8d8"/></svg>
<svg class="i" style="left:1823.5px;top:172px;" width="17" height="16.5" viewBox="0 0 17 16.5"><rect x="2.200" y="2.200" width="12.400" height="11.800" fill="none" stroke="#d8d8d8" stroke-width="1.600"/><g fill="#d8d8d8"><rect x="0" y="0" width="4.200" height="4.200"/><rect x="12.600" y="0" width="4.200" height="4.200"/><rect x="0" y="12" width="4.200" height="4.200"/><rect x="12.600" y="12" width="4.200" height="4.200"/></g><g fill="#323232"><rect x="1.300" y="1.300" width="1.600" height="1.600"/><rect x="13.900" y="1.300" width="1.600" height="1.600"/><rect x="1.300" y="13.300" width="1.600" height="1.600"/><rect x="13.900" y="13.300" width="1.600" height="1.600"/></g></svg>
<svg class="i" style="left:1861.5px;top:172px;" width="15" height="16" viewBox="0 0 15 16"><path d="M4.200 1h6.600l3.400 3.400v9.800H8.800V7.200H4.200z" fill="none" stroke="#d8d8d8" stroke-width="1.600"/><path d="M10.400 1v3.800h3.800" fill="none" stroke="#d8d8d8" stroke-width="1.300"/><rect x="0" y="8" width="8" height="8" fill="#d8d8d8"/></svg>
<div style="left:1898.3px;top:167.5px;width:12.8px;height:26.3px;background:#282828;border:1px solid #444;border-radius:7px;"></div>
<div style="left:1898.9px;top:167.6px;width:11.6px;height:11.6px;background:#d6d6d6;border-radius:50%;"></div>
<div style="left:1583.3px;top:201px;width:334.7px;height:1.5px;background:#282828;"></div>
<div style="left:1588.7px;top:211.9px;width:172px;height:28.1px;background:#282828;border:1px solid #3a3a3a;border-radius:4px;"></div>
<span class="t" style="left:1600.00px;top:213.93px;font-size:15px;color:#6e6e6e;letter-spacing:1.61px">正常</span>
<svg class="i" style="left:1746.5px;top:225.5px;" width="11" height="7" viewBox="0 0 11 7"><path d="M.8.800l4.200 4 4.200-4" fill="none" stroke="#4a4a4a" stroke-width="1.400"/></svg>
<span class="t" style="left:1771.01px;top:210.23px;font-size:15px;color:#828282;letter-spacing:0.41px">不透明度:</span>
<div style="left:1842.5px;top:211.9px;width:66.7px;height:20.4px;background:#2a2a2a;border:1px solid #404040;border-radius:2px;"></div>
<div style="left:1888.3px;top:212.4px;width:1px;height:19.4px;background:#404040;"></div>
<span class="t" style="left:1845.52px;top:210.73px;font-size:15px;color:#6e6e6e"><span style="font-size:13.16px">100%</span></span>
<svg class="i" style="left:1894px;top:219.8px;" width="11" height="7" viewBox="0 0 11 7"><path d="M.8.800l4.400 4.200 4.400-4.200" fill="none" stroke="#c8c8c8" stroke-width="1.500"/></svg>
<div style="left:1583.3px;top:243px;width:334.7px;height:1.5px;background:#2a2a2a;"></div>
<span class="t" style="left:1591.39px;top:251.82px;font-size:15px;color:#787878;letter-spacing:1.48px">锁定:</span>
<svg class="i" style="left:1639.8px;top:256px;" width="17" height="17" viewBox="0 0 17 17"><rect x="0" y="0" width="16.300" height="15.800" fill="#d8d8d8"/><g fill="#2c2c2c"><rect x="2.4" y="2.3" width="3.800" height="3.800"/><rect x="10.2" y="2.3" width="3.800" height="3.800"/><rect x="6.3" y="6.2" width="3.800" height="3.800"/><rect x="2.4" y="10.1" width="3.800" height="3.800"/><rect x="10.2" y="10.1" width="3.800" height="3.800"/></g></svg>
<svg class="i" style="left:1672.5px;top:254.5px;" width="20" height="20" viewBox="0 0 20 20"><g fill="#d8d8d8"><path d="M18.500 0.500c.7.400.6 1.400 0 2.500L11.900 13.600l-3.500-2.700L16.400 1.300c.700-.900 1.500-1.200 2.100-.8z"/><path d="M7.600 11.700l3.500 2.700c.9 2.500-.5 4.700-3.100 5.500-2.300.7-5.200.1-7-.5 2.100-.8 2.500-2.200 3-3.900.500-1.800 1.700-3.300 3.600-3.800z"/></g></svg>
<svg class="i" style="left:1704.3px;top:255px;" width="18" height="18" viewBox="0 0 18 18"><path d="M9 0.300l2.900 3.400h-2v4.400h4.400v-2l3.400 2.900-3.400 2.900v-2h-4.400v4.400h2L9 17.700l-2.900-3.400h2v-4.400H3.700v2L.3 9l3.400-2.900v2h4.400V3.700h-2z" fill="#d8d8d8"/></svg>
<svg class="i" style="left:1736.5px;top:255.5px;" width="21" height="17" viewBox="0 0 21 17"><path d="M4 3.500h9.500l3.500 3.500v6.500H4z" fill="none" stroke="#d8d8d8" stroke-width="1.600"/><path d="M13 3.500v4h4" fill="none" stroke="#d8d8d8" stroke-width="1.200"/><g fill="#d8d8d8"><rect x="0" y="0" width="1.600" height="1.600"/><rect x="0" y="2.600" width="1.600" height="1.600"/><rect x="2.600" y="0" width="1.600" height="1.600"/><rect x="19" y="0" width="1.600" height="1.600"/><rect x="19" y="2.600" width="1.600" height="1.600"/><rect x="16.400" y="0" width="1.600" height="1.600"/><rect x="0" y="15.200" width="1.600" height="1.600"/><rect x="0" y="12.600" width="1.600" height="1.600"/><rect x="2.600" y="15.200" width="1.600" height="1.600"/><rect x="19" y="15.200" width="1.600" height="1.600"/><rect x="19" y="12.600" width="1.600" height="1.600"/><rect x="16.400" y="15.200" width="1.600" height="1.600"/></g></svg>
<svg class="i" style="left:1772.5px;top:255.3px;" width="16" height="17.5" viewBox="0 0 16 17.5"><path d="M4 7.500V4.800a3.800 3.800 0 0 1 7.600 0v2.700" fill="none" stroke="#d8d8d8" stroke-width="2"/><rect x="0.500" y="7.200" width="14.600" height="10" rx="1" fill="#d8d8d8"/><circle cx="7.800" cy="12.200" r="1.600" fill="#323232"/></svg>
<span class="t" style="left:1800.66px;top:251.82px;font-size:15px;color:#828282;letter-spacing:0.5px">填充:</span>
<div style="left:1842.5px;top:254.2px;width:66.7px;height:20.4px;background:#2a2a2a;border:1px solid #404040;border-radius:2px;"></div>
<div style="left:1888.3px;top:254.7px;width:1px;height:19.4px;background:#404040;"></div>
<span class="t" style="left:1845.52px;top:253.03px;font-size:15px;color:#6e6e6e"><span style="font-size:13.16px">100%</span></span>
<svg class="i" style="left:1894px;top:262.1px;" width="11" height="7" viewBox="0 0 11 7"><path d="M.8.800l4.400 4.200 4.400-4.200" fill="none" stroke="#c8c8c8" stroke-width="1.500"/></svg>
<div style="left:1583.3px;top:288px;width:334.7px;height:756px;background:#2a2a2a;"></div>
<div style="left:1583.3px;top:288px;width:310.9px;height:221.4px;background:#323232;"></div>
<div style="left:1627.5px;top:288px;width:1px;height:221.4px;background:#2c2c2c;"></div>
<div style="left:1583.3px;top:325px;width:310.4px;height:1.2px;background:#2b2b2b;"></div>
<div style="left:1583.3px;top:385.3px;width:310.4px;height:1.2px;background:#2b2b2b;"></div>
<div style="left:1583.3px;top:446.3px;width:310.4px;height:1.2px;background:#2b2b2b;"></div>
<div style="left:1583.3px;top:508.6px;width:310.4px;height:1.2px;background:#2b2b2b;"></div>
<div style="left:1628.5px;top:326.2px;width:265.9px;height:58.8px;background:#4d4d4d;"></div>
<svg class="i" style="left:1596.8px;top:301.9px;" width="20" height="12" viewBox="0 0 20 12"><path d="M0 5.800C2.800 1.500 6.300 0 9.800 0s7 1.500 9.800 5.800c-2.800 4.300-6.300 5.800-9.800 5.800S2.800 10.100 0 5.800z" fill="#dedede"/><circle cx="10.300" cy="5.600" r="3.800" fill="#2c2c2c"/><circle cx="11.200" cy="4.500" r="1" fill="#dedede"/></svg>
<svg class="i" style="left:1596.8px;top:350.7px;" width="20" height="12" viewBox="0 0 20 12"><path d="M0 5.800C2.800 1.500 6.300 0 9.800 0s7 1.500 9.800 5.800c-2.800 4.300-6.300 5.800-9.800 5.800S2.800 10.100 0 5.800z" fill="#dedede"/><circle cx="10.300" cy="5.600" r="3.800" fill="#2c2c2c"/><circle cx="11.200" cy="4.500" r="1" fill="#dedede"/></svg>
<svg class="i" style="left:1596.8px;top:413.2px;" width="20" height="12" viewBox="0 0 20 12"><path d="M0 5.800C2.800 1.500 6.300 0 9.800 0s7 1.500 9.800 5.800c-2.800 4.300-6.300 5.800-9.800 5.800S2.800 10.100 0 5.800z" fill="#dedede"/><circle cx="10.300" cy="5.600" r="3.800" fill="#2c2c2c"/><circle cx="11.200" cy="4.500" r="1" fill="#dedede"/></svg>
<svg class="i" style="left:1596.8px;top:473.5px;" width="20" height="12" viewBox="0 0 20 12"><path d="M0 5.800C2.800 1.500 6.300 0 9.800 0s7 1.500 9.800 5.800c-2.800 4.300-6.300 5.800-9.800 5.800S2.800 10.100 0 5.800z" fill="#dedede"/><circle cx="10.300" cy="5.600" r="3.800" fill="#2c2c2c"/><circle cx="11.200" cy="4.500" r="1" fill="#dedede"/></svg>
<svg class="i" style="left:1636.5px;top:301px;" width="6" height="13" viewBox="0 0 6 13"><path d="M.8.800l4 5.500-4 5.500" fill="none" stroke="#9a9a9a" stroke-width="1.300"/></svg>
<svg class="i" style="left:1652px;top:298px;" width="22" height="17" viewBox="0 0 22 17"><path d="M0 1.600C0 .8.600 0 1.500 0h6.300l1.600 2.300h10.800c.9 0 1.500.7 1.500 1.500v11c0 .9-.6 1.500-1.500 1.500H1.500C.600 16.300 0 15.700 0 14.800z" fill="#d6d6d6"/></svg>
<span class="t" style="left:1691.63px;top:295.23px;font-size:15px;color:#e6e6e6;letter-spacing:0.55px">文字</span>
<svg width="0" height="0" style="position:absolute"><defs><pattern id="chk" width="7" height="7" patternUnits="userSpaceOnUse"><rect width="7" height="7" fill="#fff"/><rect width="3.500" height="3.500" fill="#ccc"/><rect x="3.500" y="3.500" width="3.500" height="3.500" fill="#ccc"/></pattern></defs></svg>
<svg class="i" style="left:1635.6px;top:333.6px;overflow:hidden;" width="45.5" height="45.5" viewBox="0 0 45.5 45.5"><rect width="45.5" height="45.5" fill="url(#chk)"/><g transform="scale(0.0682671)"><rect x="-125" y="-66" width="250" height="132" fill="#ffff00" transform="translate(333.25 333.25) rotate(-45)"/><rect x="-125" y="-66" width="250" height="132" fill="#ffff00" transform="translate(0 0) rotate(-45)"/><rect x="-125" y="-66" width="250" height="132" fill="#ffff00" transform="translate(666.5 0) rotate(-45)"/><rect x="-125" y="-66" width="250" height="132" fill="#ffff00" transform="translate(0 666.5) rotate(-45)"/><rect x="-125" y="-66" width="250" height="132" fill="#ffff00" transform="translate(666.5 666.5) rotate(-45)"/></g></svg>
<svg class="i" style="left:1631.1px;top:329.3px;" width="54" height="54" viewBox="0 0 54 54"><g fill="none" stroke="#fff" stroke-width="1.500"><path d="M.75 18V.75H18M36 .75H53.250V18M53.250 36v17.250H36M18 53.250H.75V36"/></g></svg>
<span class="t" style="left:1695.04px;top:344.23px;font-size:15px;color:#ffffff">矩形 1 拷贝</span>
<div style="left:1634.6px;top:393.9px;width:47.5px;height:47px;background:#c8c8c8;"></div>
<svg class="i" style="left:1635.6px;top:394.9px;" width="45.5" height="45" viewBox="0 0 45.5 45"><rect width="45.500" height="45" fill="url(#chk)"/></svg>
<span class="t" style="left:1694.87px;top:405.82px;font-size:15px;color:#e6e6e6;letter-spacing:0.59px">线条</span>
<div style="left:1634.6px;top:455.5px;width:47.5px;height:47.2px;background:#8a8a8a;"></div>
<div style="left:1635.6px;top:456.5px;width:45.5px;height:45.2px;background:#ffffff;"></div>
<span class="t" style="left:1694.79px;top:466.82px;font-size:15px;color:#e6e6e6;letter-spacing:1px">背景</span>
<svg class="i" style="left:1855px;top:470px;" width="17" height="18" viewBox="0 0 17 18"><path d="M4 7.600V5a4.100 4.100 0 0 1 8.200 0v2.600" fill="none" stroke="#cfcfcf" stroke-width="1.700"/><rect x="1" y="7.600" width="14.200" height="9" rx="1.200" fill="none" stroke="#cfcfcf" stroke-width="1.700"/><circle cx="8.100" cy="12.200" r="1.500" fill="#cfcfcf"/></svg>
<div style="left:1583.3px;top:1043.8px;width:334.7px;height:34.2px;background:#323232;"></div>
<svg class="i" style="left:1642px;top:1053.7px;" width="21" height="12" viewBox="0 0 20.500 11.600"><g fill="none" stroke="#7a7a7a" stroke-width="2.200"><path d="M8.500 1.500H6.200a4.300 4.300 0 0 0 0 8.600h2.300M12 1.500h2.300a4.300 4.300 0 0 1 0 8.600H12"/><path d="M6 5.800h8.500" stroke-width="2.400"/></g></svg>
<svg class="i" style="left:1679.5px;top:1049px;" width="24" height="24" viewBox="0 0 24 24"><g fill="#dcdcdc" transform="translate(-0.600 19.200) skewX(-13)"><text x="0 6.135" y="0" font-size="19.8" font-family="'Liberation Sans',sans-serif">fx</text></g><g transform="translate(16 20)"><path d="M0 0h5.600l-2.800 3z" fill="#eee"/></g></svg>
<svg class="i" style="left:1716px;top:1052px;" width="20" height="15" viewBox="0 0 20 15"><rect x="0" y="0" width="19.500" height="14.500" rx="1" fill="#dcdcdc"/><circle cx="9.700" cy="7.200" r="4.200" fill="#323232"/></svg>
<svg class="i" style="left:1753.5px;top:1051px;" width="22" height="20" viewBox="0 0 22 20"><circle cx="8.200" cy="8.200" r="7" fill="none" stroke="#dcdcdc" stroke-width="1.600"/><path d="M13.200 3.300A7 7 0 0 1 3.300 13.200z" fill="#dcdcdc"/><g transform="translate(15 17.500)"><path d="M0 0h5.600l-2.800 3z" fill="#eee"/></g></svg>
<svg class="i" style="left:1788.5px;top:1051.8px;" width="20" height="16" viewBox="0 0 20 16"><path d="M0 1.500C0 .7.600 0 1.400 0h5.400l1.500 2.100h9.800c.8 0 1.400.6 1.400 1.400v10.600c0 .8-.6 1.400-1.400 1.400H1.400C.600 15.500 0 14.900 0 14.100z" fill="#dcdcdc"/></svg>
<svg class="i" style="left:1826.5px;top:1051.8px;" width="17" height="17" viewBox="0 0 17 17"><path d="M1 1h14v14H6.600L1 9.400z" fill="#1e1e1e" stroke="#dcdcdc" stroke-width="1.700"/><path d="M1 9.400h5.600v5.600z" fill="#dcdcdc" stroke="#dcdcdc" stroke-width="1"/></svg>
<svg class="i" style="left:1863px;top:1050.6px;" width="17" height="19" viewBox="0 0 17 19"><g fill="none" stroke="#dcdcdc"><path d="M0 3.800h16.500" stroke-width="1.800"/><path d="M5.500 3.500V1h5.500v2.500" stroke-width="1.500"/><path d="M2 4.500l.7 13h11l.8-13" stroke-width="1.700"/><path d="M5.600 7v8M8.300 7v8M11 7v8" stroke-width="1.300"/></g></svg>
<div style="left:753.5px;top:257px;width:388.5px;height:165px;background:#323232;box-shadow:0 3px 12px 0 rgba(0,0,0,.30);"></div>
<div style="left:753.5px;top:257px;width:388.5px;height:44px;background:#ffffff;"></div>
<span class="t" style="left:764.44px;top:265.95px;font-size:18px;color:#000;letter-spacing:0.25px">扩展选区</span>
<svg class="i" style="left:1110px;top:271px;" width="16" height="16" viewBox="0 0 16 16"><path d="M.5.5l14.500 14.500M15 .5L.5 15" stroke="#111" stroke-width="1.300" fill="none"/></svg>
<span class="t" style="left:787.28px;top:326.56px;font-size:19.5px;color:#b4b4b4;letter-spacing:0.58px">扩展量(E):</span>
<div style="left:887.7px;top:326px;width:76.5px;height:33px;background:#262626;border:1px solid #2a5aa8;"></div>
<div style="left:892.7px;top:331.4px;width:10.5px;height:20.8px;background:#0078d7;"></div>
<div style="left:903.3px;top:331.4px;width:1px;height:20.8px;background:#cfcfcf;"></div>
<span class="t" style="left:893.22px;top:327.36px;font-size:19.5px;color:#fff">2</span>
<span class="t" style="left:979.98px;top:326.56px;font-size:19.5px;color:#b4b4b4">像素</span>
<div style="left:1049px;top:317.2px;width:77px;height:36.5px;border:1.500px solid #dadada;border-radius:19px;"></div>
<span class="t" style="left:1067.48px;top:323.06px;font-size:19.5px;color:#fff">确定</span>
<div style="left:1049px;top:368.6px;width:77px;height:36px;border:1.500px solid #707070;border-radius:19px;"></div>
<span class="t" style="left:1067.44px;top:373.46px;font-size:19.5px;color:#ececec;letter-spacing:0.71px">取消</span>
<div style="left:770px;top:375.8px;width:17.5px;height:17.5px;background:#2a2a2a;border:1.500px solid #5a5a5a;border-radius:3.500px;"></div>
<span class="t" style="left:799.48px;top:370.23px;font-size:19px;color:#dcdcdc;letter-spacing:1.09px">应用画布边界的效果</span>
<svg class="i" style="left:1097px;top:326px;" width="14" height="22" viewBox="0 0 14 22"><path d="M1.500 1.500v15.600l3.700-3.500 2.600 6 2.300-1-2.600-5.900h5z" fill="#fff" stroke="#222" stroke-width="1" stroke-linejoin="round"/></svg></body></html>
